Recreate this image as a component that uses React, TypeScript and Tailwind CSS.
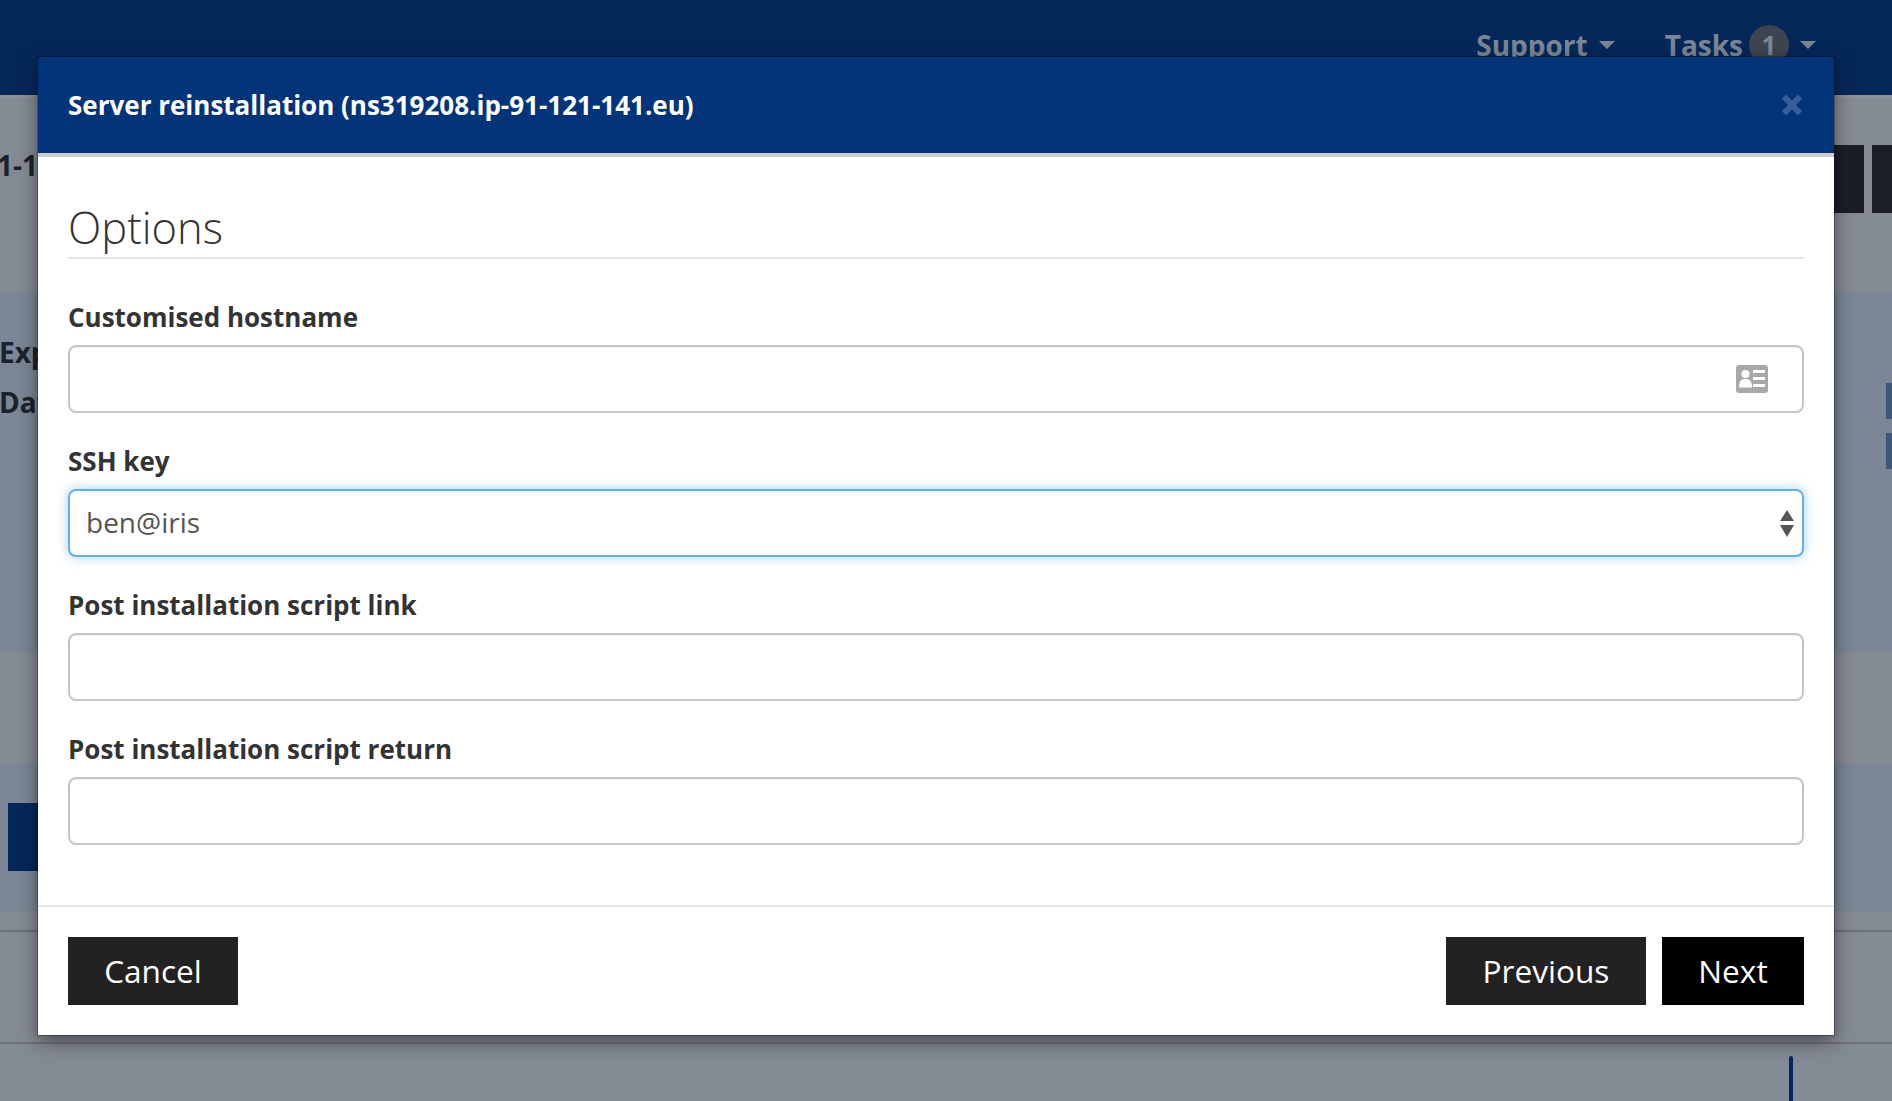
const font = { fontFamily: '"Open Sans", "Noto Sans", sans-serif' }

function Caret() {
    return <span className="ml-[11px] inline-block h-0 w-0 border-x-[8px] border-t-[8px] border-x-transparent border-t-[#7a8797]" />
}

function VCardIcon() {
    return (
        <svg width="32" height="28" viewBox="0 0 32 28">
            <rect x="0" y="0" width="32" height="28" rx="3" fill="#a8a8a8" />
            <circle cx="9.5" cy="9" r="4" fill="#fff" />
            <path d="M3 22.5 C3 16 5.5 14 9.5 14 C13.5 14 16 16 16 22.5 Z" fill="#fff" />
            <rect x="17" y="5" width="12" height="3" fill="#fff" />
            <rect x="17" y="12" width="12" height="3" fill="#fff" />
            <rect x="17" y="19" width="12" height="3" fill="#fff" />
        </svg>
    )
}

function Label({ children }: { children: string }) {
    return <label className="mb-[12px] block text-[26px] leading-[32px] font-bold text-[#333]">{children}</label>
}

function TextInput() {
    return <input className="block h-[68px] w-full rounded-[8px] border-2 border-[#c6c6c6] bg-white shadow-[inset_0_1px_1px_rgba(0,0,0,0.075)]" />
}

export default function App() {
    return (
        <div className="relative h-[1101px] w-full overflow-hidden bg-[#858b95]" style={font}>
            {/* Page behind the dialog */}
            <nav className="flex h-[98px] items-start justify-end border-b-[3px] border-[#8e9299] bg-[#05285a] pt-[25px] pr-[76px] text-[28px] leading-[40px] font-bold text-[#7a8797]">
                <span className="flex items-center">Support<Caret /></span>
                <span className="ml-[50px] flex items-center">
                    Tasks
                    <span className="ml-[6px] flex h-10 w-10 items-center justify-center rounded-full bg-[#3f4550] text-[26px]">1</span>
                    <Caret />
                </span>
            </nav>
            <div className="flex h-[195px] items-start justify-between pt-[47px]">
                <h1 className="-ml-[3px] text-[28px] leading-[40px] font-bold text-[#1c222b]">1-121</h1>
                <div className="flex gap-2">
                    <span className="h-[68px] w-[64px] bg-[#1a1f27]" />
                    <span className="h-[68px] w-[20px] bg-[#1a1f27]" />
                </div>
            </div>
            <section className="flex h-[360px] justify-between bg-[#7b8796] pt-[34px]">
                <div className="-ml-px text-[28px] leading-[50px] font-bold text-[#1c222b]">
                    <div>Expiry</div>
                    <div>Date</div>
                </div>
                <div className="flex flex-col gap-[14px] pt-[56px]">
                    <span className="h-9 w-[6px] bg-[#3c5777]" />
                    <span className="h-9 w-[6px] bg-[#3c5777]" />
                </div>
            </section>
            <div className="h-[110px]" />
            <section className="flex h-[148px] items-center justify-between bg-[#7b8796] pl-2">
                <span className="h-[68px] w-[60px] bg-[#05285a]" />
            </section>
            <div className="h-[19px]" />
            <div className="h-[114px] border-y-2 border-[#6c717b]" />
            <div className="ml-[1789px] mt-[12px] h-[60px] w-[4px] rounded-t-full bg-[#05285a]" />

            {/* Dialog */}
            <div className="absolute top-[57px] left-[38px] w-[1796px] bg-white shadow-[0_6px_18px_rgba(0,0,0,0.5),0_0_0_1px_rgba(0,0,0,0.25)]">
                <header className="flex h-[100px] items-center justify-between border-b-[4px] border-[#ccc] bg-[#013478] px-[30px]">
                    <h4 className="text-[26px] leading-[36px] font-bold text-white">Server reinstallation (ns319208.ip-91-121-141.eu)</h4>
                    <svg className="mr-[2px]" width="20" height="22" viewBox="0 0 20 22">
                        <path d="M2 2.5 L18 19.5 M18 2.5 L2 19.5" stroke="#3a5f98" strokeWidth="6" />
                    </svg>
                </header>
                <div className="px-[30px] pt-[30px]">
                    <h3 className="mb-[42px] h-[72px] border-b-2 border-[#e5e5e5] pt-[11px] text-[43.5px] leading-[60px] font-[350] text-[#333]">Options</h3>
                    <div className="mb-[32px]">
                        <Label>Customised hostname</Label>
                        <div className="relative">
                            <TextInput />
                            <span className="absolute top-[20px] right-[36px] flex"><VCardIcon /></span>
                        </div>
                    </div>
                    <div className="mb-[32px]">
                        <Label>SSH key</Label>
                        <div className="relative flex h-[68px] items-center rounded-[8px] border-2 border-[#66afe9] bg-white pb-[2px] pl-[16px] text-[28px] text-[#555] shadow-[0_0_12px_rgba(102,175,233,0.6)]">
                            ben@iris
                            <svg className="absolute top-[19px] right-[8px]" width="14" height="27" viewBox="0 0 14 27">
                                <path d="M7 0 L14 11 L0 11 Z M0 15 L14 15 L7 27 Z" fill="#555" />
                            </svg>
                        </div>
                    </div>
                    <div className="mb-[32px]">
                        <Label>Post installation script link</Label>
                        <TextInput />
                    </div>
                    <div>
                        <Label>Post installation script return</Label>
                        <TextInput />
                    </div>
                </div>
                <footer className="mt-[60px] flex h-[130px] items-center justify-between border-t-2 border-[#e5e5e5] px-[30px]">
                    <button className="h-[68px] w-[170px] bg-[#222] text-[31.6px] text-white">Cancel</button>
                    <div className="flex gap-4">
                        <button className="h-[68px] w-[200px] bg-[#222] text-[31.6px] text-white">Previous</button>
                        <button className="h-[68px] w-[142px] bg-black text-[31.6px] text-white">Next</button>
                    </div>
                </footer>
            </div>
        </div>
    )
}
